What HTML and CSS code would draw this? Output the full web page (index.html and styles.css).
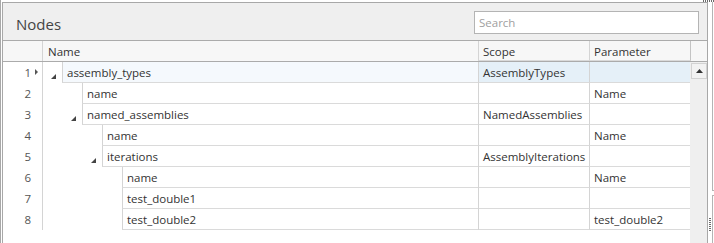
FILE: index.html
```html
<!DOCTYPE html>
<html>

<head>
  <meta charset="UTF-8">
  <title>Nodes</title>
  <link rel="stylesheet" href="styles.css">
</head>

<body>
  <div class="app">
    <div class="edge"></div>

    <div class="stack">
      <div class="topbar">
        <div class="grip-top"></div>
      </div>

      <div class="main">
        <div class="frame">
          <div class="header">
            <h1 class="title">Nodes</h1>
            <input class="search" type="text" placeholder="Search">
          </div>

          <div class="colhead">
            <div class="hc num"></div>
            <div class="hc name">Name</div>
            <div class="hc scope">Scope</div>
            <div class="hc param">Parameter</div>
            <div class="hc corner"></div>
          </div>

          <div class="body">
            <div class="rows">
              <div class="row selected">
                <div class="num"><span class="n">1</span><span class="mark"><svg width="3" height="6" viewBox="0 0 3 6"><polygon points="0,0 3,3 0,6" fill="#555"/></svg></span></div>
                <div class="name">
                  <div class="indent lv0"><svg class="exp" width="5" height="5" viewBox="0 0 5 5"><polygon points="5,0 5,5 0,5" fill="#444"/></svg></div>
                  <div class="label">assembly_types</div>
                </div>
                <div class="scope">AssemblyTypes</div>
                <div class="param"></div>
              </div>

              <div class="row">
                <div class="num"><span class="n">2</span><span class="mark"></span></div>
                <div class="name">
                  <div class="indent lv1"></div>
                  <div class="label">name</div>
                </div>
                <div class="scope"></div>
                <div class="param">Name</div>
              </div>

              <div class="row">
                <div class="num"><span class="n">3</span><span class="mark"></span></div>
                <div class="name">
                  <div class="indent lv1"><svg class="exp" width="5" height="5" viewBox="0 0 5 5"><polygon points="5,0 5,5 0,5" fill="#444"/></svg></div>
                  <div class="label">named_assemblies</div>
                </div>
                <div class="scope">NamedAssemblies</div>
                <div class="param"></div>
              </div>

              <div class="row">
                <div class="num"><span class="n">4</span><span class="mark"></span></div>
                <div class="name">
                  <div class="indent lv2"></div>
                  <div class="label">name</div>
                </div>
                <div class="scope"></div>
                <div class="param">Name</div>
              </div>

              <div class="row">
                <div class="num"><span class="n">5</span><span class="mark"></span></div>
                <div class="name">
                  <div class="indent lv2"><svg class="exp" width="5" height="5" viewBox="0 0 5 5"><polygon points="5,0 5,5 0,5" fill="#444"/></svg></div>
                  <div class="label">iterations</div>
                </div>
                <div class="scope">AssemblyIterations</div>
                <div class="param"></div>
              </div>

              <div class="row">
                <div class="num"><span class="n">6</span><span class="mark"></span></div>
                <div class="name">
                  <div class="indent lv3"></div>
                  <div class="label">name</div>
                </div>
                <div class="scope"></div>
                <div class="param">Name</div>
              </div>

              <div class="row">
                <div class="num"><span class="n">7</span><span class="mark"></span></div>
                <div class="name">
                  <div class="indent lv3"></div>
                  <div class="label">test_double1</div>
                </div>
                <div class="scope"></div>
                <div class="param"></div>
              </div>

              <div class="row">
                <div class="num"><span class="n">8</span><span class="mark"></span></div>
                <div class="name">
                  <div class="indent lv3"></div>
                  <div class="label">test_double2</div>
                </div>
                <div class="scope"></div>
                <div class="param">test_double2</div>
              </div>
            </div>

            <div class="vscroll">
              <div class="btn-up"><svg width="7" height="4" viewBox="0 0 7 4"><polygon points="3.5,0 7,4 0,4" fill="#333"/></svg></div>
            </div>
          </div>
        </div>

        <div class="side">
          <div class="side-a"></div>
          <div class="side-b"></div>
          <div class="grip-side"></div>
        </div>
      </div>
    </div>
  </div>
</body>
</html>
```

FILE: styles.css
```css
* {
  box-sizing: border-box;
}

body {
  margin: 0;
  width: 714px;
  height: 243px;
  overflow: hidden;
  background: #ffffff;
  font-family: "Open Sans", "Noto Sans", sans-serif;
  font-size: 11.5px;
  color: #333333;
}

.app {
  display: flex;
  height: 243px;
}

.edge {
  width: 2px;
  border-left: 1px solid #a8a8a8;
}

.stack {
  display: flex;
  flex-direction: column;
  width: 712px;
}

.topbar {
  height: 3px;
  display: flex;
  justify-content: flex-end;
}

.grip-top {
  width: 11px;
  height: 2px;
  background: repeating-linear-gradient(to right, #6a6a6a 0 1px, transparent 1px 2px);
}

.main {
  display: flex;
  flex: 1;
}

.frame {
  width: 706px;
  border: 1px solid #a8a8a8;
  border-bottom: none;
  display: flex;
  flex-direction: column;
}

/* cabecalho do painel */
.header {
  height: 38px;
  background: #efefef;
  border-bottom: 1px solid #ababab;
  display: flex;
  justify-content: space-between;
  align-items: flex-start;
  padding: 8px 8px 0 13px;
}

.title {
  margin: 0;
  padding-top: 2px;
  font-size: 15px;
  font-weight: normal;
  color: #444444;
  line-height: 22px;
}

.search {
  width: 225px;
  height: 23px;
  border: 1px solid #b4b4b4;
  background: #ffffff;
  font-family: inherit;
  font-size: 11.5px;
  padding: 0 4px;
  outline: none;
}

.search::placeholder {
  color: #a0a0a0;
}

/* cabecalho das colunas */
.colhead {
  display: flex;
  height: 21px;
  background: #f7f7f7;
  border-bottom: 1px solid #ababab;
}

.hc {
  line-height: 19px;
  padding-top: 1px;
  border-right: 1px solid #c4c4c4;
  padding-left: 4px;
  color: #333333;
}

.hc.num {
  width: 40px;
}

.hc.name {
  width: 436px;
  padding-left: 5px;
}

.hc.scope {
  width: 111px;
}

.hc.param {
  width: 101px;
}

.hc.corner {
  width: 16px;
  border-right: none;
}

/* linhas */
.body {
  display: flex;
  flex: 1;
}

.rows {
  width: 687px;
  display: flex;
  flex-direction: column;
}

.row {
  display: flex;
  height: 21px;
}

.row > div {
  height: 21px;
}

.num {
  width: 40px;
  border-right: 1px solid #d4d4d4;
  display: flex;
  justify-content: flex-end;
  color: #555555;
  line-height: 19px;
  padding-top: 1px;
}

.mark {
  width: 11px;
  padding-left: 4px;
  display: flex;
  align-items: center;
  padding-bottom: 2px;
}

.name {
  width: 436px;
  border-right: 1px solid #d4d4d4;
  display: flex;
}

.indent {
  display: flex;
  justify-content: flex-end;
  align-items: flex-start;
  padding-top: 12px;
  padding-right: 6px;
}

.lv0 { width: 19px; }
.lv1 { width: 39px; }
.lv2 { width: 59px; }
.lv3 { width: 79px; }

.exp {
  display: block;
}

.label {
  flex: 1;
  border-left: 1px solid #d4d4d4;
  border-bottom: 1px solid #dadada;
  padding-left: 4px;
  padding-top: 1px;
  line-height: 19px;
}

.scope {
  width: 111px;
  border-right: 1px solid #d4d4d4;
  border-bottom: 1px solid #dadada;
  padding-left: 4px;
  padding-top: 1px;
  line-height: 19px;
}

.param {
  width: 100px;
  border-bottom: 1px solid #dadada;
  padding-left: 4px;
  padding-top: 1px;
  line-height: 19px;
}

.selected .label {
  background: #f5f9fd;
}

.selected .scope,
.selected .param {
  background: #e5f0f8;
}

/* barra de rolagem */
.vscroll {
  width: 17px;
  background: #efefef;
  padding: 1px 0 0 1px;
}

.btn-up {
  width: 16px;
  height: 16px;
  border: 1px solid #d2d2d2;
  background: #f2f2f2;
  display: flex;
  justify-content: center;
  align-items: center;
}

/* painel vizinho */
.side {
  width: 6px;
  position: relative;
}

.side-a {
  margin-left: 4px;
  height: 189px;
  border-left: 1px solid #b4b4b4;
  border-bottom: 1px solid #b4b4b4;
}

.side-b {
  margin-left: 4px;
  margin-top: 4px;
  height: 60px;
  border-left: 1px solid #b4b4b4;
  border-top: 1px solid #b4b4b4;
}

.grip-side {
  position: absolute;
  left: 1px;
  top: 216px;
  width: 2px;
  height: 13px;
  background: repeating-linear-gradient(to bottom, #6a6a6a 0 1px, transparent 1px 2px);
}
```
